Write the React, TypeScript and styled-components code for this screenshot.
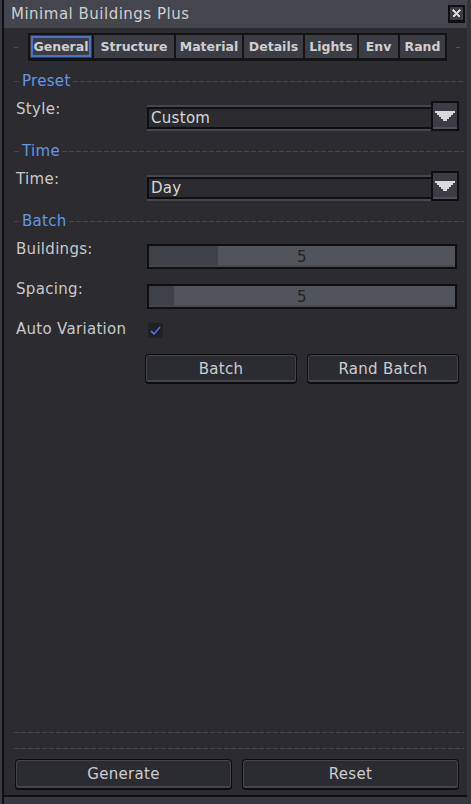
import React from "react";
import styled, { createGlobalStyle } from "styled-components";

const GlobalStyle = createGlobalStyle`
  html, body {
    margin: 0;
    padding: 0;
    background: #2b2b30;
  }
  body {
    font-family: "DejaVu Sans", "Liberation Sans", sans-serif;
  }
`;

const Window = styled.div`
  width: 471px;
  height: 804px;
  box-sizing: border-box;
  display: flex;
  flex-direction: column;
  padding: 0 4px 9px 4px;
  background: #2b2b30;
  box-shadow: inset 2px 0 0 #3a3b42, inset 4px 0 0 #0f0f11,
    inset -4px 0 0 #34353b, inset 0 -7px 0 #37383f, inset 0 -9px 0 #101012;
  color: #c9c9c9;
  font-size: 15px;
  letter-spacing: 0.3px;
`;

const TitleBar = styled.div`
  height: 28px;
  flex-shrink: 0;
  display: flex;
  align-items: center;
  justify-content: space-between;
  padding: 0 2px 0 7px;
  background: #44454d;
`;

const Title = styled.span`
  color: #d0d0d0;
  letter-spacing: 0.5px;
`;

const Content = styled.div`
  flex: 1;
  display: flex;
  flex-direction: column;
  gap: 12px;
  padding: 5px 3px 0 10px;
`;

const TabRow = styled.div`
  display: flex;
  align-items: center;
`;

const Nub = styled.div<{ $left?: boolean }>`
  width: 4px;
  height: 1px;
  background: #4e4f57;
  margin: ${(p) => (p.$left ? "0 10px 0 0" : "0 0 0 9px")};
`;

const TabBar = styled.div`
  display: flex;
  gap: 2px;
  padding: 2px 2px 3px 2px;
  background: #131316;
`;

const Tab = styled.div<{ $w: number; $active?: boolean }>`
  width: ${(p) => p.$w}px;
  height: 23px;
  display: flex;
  align-items: center;
  justify-content: center;
  background: #3c3d44;
  color: #cfcfcf;
  font-size: 12.5px;
  font-weight: bold;
  letter-spacing: 0;
  box-shadow: ${(p) =>
    p.$active ? "inset 0 0 0 1px #3c3d44, inset 0 0 0 3px #4a72c8" : "none"};
`;

const SectionHeader = styled.div`
  display: flex;
  align-items: center;
  gap: 2px;
  height: 16px;
  color: #6496e4;
`;

const Rule = styled.div<{ $w?: number }>`
  height: 1px;
  flex: ${(p) => (p.$w ? `0 0 ${p.$w}px` : "1 1 auto")};
  background: repeating-linear-gradient(
    to right,
    #45464e 0 5px,
    transparent 5px 7px
  );
`;

const FooterRule = styled.div<{ $gap?: number }>`
  height: 1px;
  flex-shrink: 0;
  margin-top: ${(p) => p.$gap ?? 0}px;
  background: repeating-linear-gradient(
    to right,
    #45464e 0 5px,
    transparent 5px 7px
  );
`;

const Row = styled.div<{ $top?: number }>`
  display: flex;
  align-items: flex-start;
  padding: 0 5px 0 2px;
  margin-top: ${(p) => p.$top ?? 0}px;
`;

const Label = styled.div<{ $w?: number }>`
  width: ${(p) => p.$w ?? 131}px;
  flex-shrink: 0;
  line-height: 16px;
`;

const Dropdown = styled.div`
  flex: 1;
  display: flex;
  height: 30px;
`;

const Field = styled.div`
  flex: 1;
  box-sizing: border-box;
  height: 22px;
  margin-top: 6px;
  padding-left: 2px;
  border: 2px solid #0f0f12;
  border-right: none;
  box-shadow: 0 -2px 0 #45464e, 0 2px 0 #45464e;
  background: #2b2b30;
  color: #d8d8d8;
  line-height: 18px;
`;

const DropButton = styled.div`
  width: 28px;
  box-sizing: border-box;
  border: 2px solid #0f0f12;
  background: #3c3d44;
  box-shadow: inset 0 -2px 0 #50515a;
  display: flex;
  align-items: center;
  justify-content: center;
`;

const Slider = styled.div`
  position: relative;
  flex: 1;
  height: 25px;
  margin: 3px 2px 0 0;
  box-sizing: border-box;
  border: 2px solid #0f0f12;
  background: #52545b;
  box-shadow: inset 0 -2px 0 #46484f;
  display: flex;
  align-items: center;
  justify-content: center;
`;

const SliderFill = styled.div`
  position: absolute;
  left: 0;
  top: 0;
  bottom: 2px;
  background: #3f4149;
`;

const SliderValue = styled.span`
  position: relative;
  color: #202125;
  line-height: 16px;
`;

const CheckWrap = styled.div`
  margin: 2px 0 0 1px;
  display: flex;
`;

const ButtonPair = styled.div`
  flex: 1;
  display: flex;
  gap: 10px;
`;

const Button = styled.div<{ $h: number }>`
  flex: 1;
  height: ${(p) => p.$h}px;
  box-sizing: border-box;
  border: 1px solid #0d0d10;
  border-bottom-width: 2px;
  border-radius: 4px;
  background: #2b2c31;
  box-shadow: inset 0 0 0 1px #44454c, inset 0 -2px 0 #44454c;
  display: flex;
  align-items: center;
  justify-content: center;
  color: #cdcdcd;
`;

const Footer = styled.div`
  display: flex;
  flex-direction: column;
  margin: 0 3px 5px 10px;
`;

const FooterButtons = styled.div`
  display: flex;
  gap: 10px;
  padding: 0 5px 0 1px;
  margin-top: 10px;
`;

function CloseIcon() {
  return (
    <svg width="17" height="18" viewBox="0 0 17 18" shapeRendering="crispEdges">
      <rect x="0" y="0" width="17" height="18" fill="#0f0f12" />
      <rect x="2" y="2" width="13" height="13" fill="#3c3d44" />
      <path
        d="M5 5l7 7M12 5l-7 7"
        stroke="#d6d6d6"
        strokeWidth="1.6"
        fill="none"
      />
    </svg>
  );
}

function Arrow() {
  return (
    <svg width="20" height="10" viewBox="0 0 20 10" shapeRendering="crispEdges">
      <path
        d="M0 0h20v2h-2v2h-2v2h-2v2h-2v2h-4v-2h-2v-2h-2v-2h-2v-2h-2z"
        fill="#dadada"
      />
    </svg>
  );
}

function Check() {
  return (
    <svg width="15" height="15" viewBox="0 0 15 15">
      <rect x="0" y="0" width="15" height="15" rx="2" fill="#222226" />
      <path
        d="M3 8l3 3 6-7"
        stroke="#1a1a1e"
        strokeWidth="3.5"
        fill="none"
      />
      <path d="M3 8l3 3 6-7" stroke="#4f72d9" strokeWidth="1.8" fill="none" />
    </svg>
  );
}

const tabs = [
  { name: "General", w: 62, active: true },
  { name: "Structure", w: 80 },
  { name: "Material", w: 66 },
  { name: "Details", w: 59 },
  { name: "Lights", w: 52 },
  { name: "Env", w: 39 },
  { name: "Rand", w: 45 },
];

function Header({ text }: { text: string }) {
  return (
    <SectionHeader>
      <Rule $w={6} />
      <span>{text}</span>
      <Rule />
    </SectionHeader>
  );
}

function Select({ label, value }: { label: string; value: string }) {
  return (
    <Row>
      <Label>{label}</Label>
      <Dropdown>
        <Field>{value}</Field>
        <DropButton>
          <Arrow />
        </DropButton>
      </Dropdown>
    </Row>
  );
}

function SliderRow({
  label,
  value,
  fill,
}: {
  label: string;
  value: number;
  fill: number;
}) {
  return (
    <Row>
      <Label>{label}</Label>
      <Slider>
        <SliderFill style={{ width: `${fill}%` }} />
        <SliderValue>{value}</SliderValue>
      </Slider>
    </Row>
  );
}

export default function App() {
  return (
    <>
      <GlobalStyle />
      <Window>
        <TitleBar>
          <Title>Minimal Buildings Plus</Title>
          <CloseIcon />
        </TitleBar>
        <Content>
          <TabRow>
            <Nub $left />
            <TabBar>
              {tabs.map((t) => (
                <Tab key={t.name} $w={t.w} $active={t.active}>
                  {t.name}
                </Tab>
              ))}
            </TabBar>
            <Nub />
          </TabRow>

          <Header text="Preset" />
          <Select label="Style:" value="Custom" />

          <Header text="Time" />
          <Select label="Time:" value="Day" />

          <Header text="Batch" />
          <SliderRow label="Buildings:" value={5} fill={22.5} />
          <SliderRow label="Spacing:" value={5} fill={8.2} />
          <Row>
            <Label>Auto Variation</Label>
            <CheckWrap>
              <Check />
            </CheckWrap>
          </Row>
          <Row $top={4}>
            <Label $w={129} />
            <ButtonPair>
              <Button $h={30}>Batch</Button>
              <Button $h={30}>Rand Batch</Button>
            </ButtonPair>
          </Row>
        </Content>
        <Footer>
          <FooterRule />
          <FooterRule $gap={15} />
          <FooterButtons>
            <Button $h={31}>Generate</Button>
            <Button $h={31}>Reset</Button>
          </FooterButtons>
        </Footer>
      </Window>
    </>
  );
}
